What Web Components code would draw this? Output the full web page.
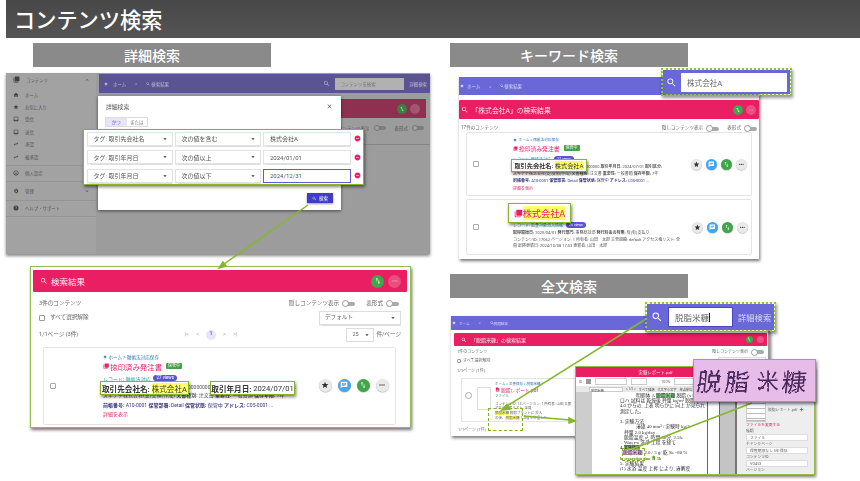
<!DOCTYPE html>
<html lang="ja"><head><meta charset="utf-8"><title>コンテンツ検索</title>
<style>
html,body{margin:0;padding:0;background:#fff}
body{font-family:Roboto,"Noto Sans CJK JP",sans-serif;color:#444}
b{font-weight:700}
mark{background:#ffff66;color:inherit}
</style></head><body>
<x-slide>
  <x-title>コンテンツ検索</x-title>
  <x-label x="33" y="43">詳細検索</x-label>
  <x-label x="450" y="43">キーワード検索</x-label>
  <x-label x="450" y="274">全文検索</x-label>

  <!-- 詳細検索 -->
  <x-dim-shot x="6" y="73" w="424" h="181"></x-dim-shot>
  <x-dialog x="98" y="96" w="243" h="114"></x-dialog>
  <x-callout x="83" y="129" w="281" h="56" pad="0"><x-conds></x-conds></x-callout>

  <!-- 検索結果 -->
  <x-shot x="30" y="266" w="381" h="162" border="1" pad="3px 3px 0 2px">
    <x-redbar h="22" fs="8.500" t="検索結果" icon="8" d="13" gap="3" pl="7"></x-redbar>
    <x-listhead count="3件のコンテンツ" sel="1" pager="1/1ページ (3件)"></x-listhead>
    <x-card ml="10" w="353" h="78" off="59" btn="13" gap="6" bm="6.500" fs="5" mt="5">
      <x-crumb>ホーム &gt; 徹帳法対応保存</x-crumb>
      <x-doc-title fs="7.400" badge="保管中">捺印済み発注書</x-doc-title>
      <x-tagline views="27 views">レコード: 徹帳法対応</x-tagline>
      <x-line><span style="margin-left:85px">00000000</span><span style="margin-left:84px">:</span></x-line>
      <x-line>ズキナチ株式会社(支)受領(作成) <b>文書種別:</b> 注文書 <b>重要性:</b> 一般書類 <b>保存年限:</b> 7年</x-line>
      <x-line kind="b"><b>前帳番号:</b> A10-0001 <b>保管部署:</b> Detail <b>保管状態:</b> 保管中 <b>アドレス:</b> C05-0001 ...</x-line>
      <x-line kind="p">詳細を表示</x-line>
    </x-card>
  </x-shot>
  <x-callout x="100" y="381" w="89" h="14" fs="7.600"><b>取引先会社名:</b>&nbsp;<mark>株式会社A</mark></x-callout>
  <x-callout x="210" y="381" w="85" h="14" fs="7.600"><b>取引年月日:</b>&nbsp;2024/07/01</x-callout>

  <!-- キーワード検索 -->
  <x-shot x="459" y="75" w="300" h="184" pad="2px 0 0">
    <x-appbar h="18" mb="5"></x-appbar>
    <x-redbar h="19" fs="6.800" t="「株式会社A」の検索結果" icon="7.500" d="10" pl="2" gap="3"></x-redbar>
    <x-listhead count="17件のコンテンツ" compact="1"></x-listhead>
    <x-card ml="7" w="286" h="64" off="46" btn="11" gap="4" bm="4.500" fs="4" mt="0">
      <x-crumb>ホーム &gt; 徹帳法対応保存</x-crumb>
      <x-doc-title fs="5.800" badge="保管中">捺印済み発注書</x-doc-title>
      <x-tagline views="27 views">レコード: 徹帳法対応</x-tagline>
      <x-line><span style="margin-left:73px">000000 <b>取引年月日:</b> 2024/07/01 <b>取引区分:</b></span></x-line>
      <x-line>ズキナチ株式会社(支)受領(作成) <b>文書種別:</b> 注文書 <b>重要性:</b> 一般書類 <b>保存年限:</b> 7年</x-line>
      <x-line kind="b"><b>前帳番号:</b> A10-0001 <b>保管部署:</b> Detail <b>保管状態:</b> 保管中 <b>アドレス:</b> C05-0001 ...</x-line>
      <x-line kind="p">詳細を表示</x-line>
    </x-card>
    <x-card ml="7" w="286" h="56" off="46" btn="11" gap="4" bm="3.500" fs="4" mt="3">
      <x-spacer h="15"></x-spacer>
      <x-tagline views="26 views">レコード: 監査対象流入情報</x-tagline>
      <x-line><b>取得開始日:</b> 2020/04/01 <b>発行部門:</b> 事務総括部 <b>発行料金の有無:</b> 有(有)支払り</x-line>
      <x-line>コンテンツID: 17062 バージョン: 1 所有者: 山田　太郎 主管組織: default アクセス権リスト: 全</x-line>
      <x-line>員 最終更新日: 2024/10/08 17:53 更新者: 山田　太郎</x-line>
    </x-card>
  </x-shot>
  <x-callout x="511" y="159" w="76" h="13" fs="6.200"><b>取引先会社名:</b>&nbsp;<mark>株式会社A</mark></x-callout>
  <x-callout x="508" y="203" w="63" h="20" fs="9.200" solid="1"><x-mini-icon n="lib" c="#ea1e63" s="9"></x-mini-icon><mark style="color:#ea1e63">株式会社A</mark></x-callout>
  <x-search x="661" y="68" w="131" h="28" text="株式会社A" input="106" ih="19" pl="3" fs="7.600"></x-search>

  <!-- 全文検索 -->
  <x-shot x="451" y="316" w="319" h="120" pad="0" rb="1">
    <x-appbar h="14" mb="3" small="1" crumb2="脱脂結果"></x-appbar>
    <x-redbar h="13" fs="5" t="「脱脂米糠」の検索結果" icon="6" d="7" ml="3" mr="1" pl="7"></x-redbar>
    <x-listhead count="1件のコンテンツ" sel="1" pager="1/1ページ (1件)" tiny="1"></x-listhead>
    <x-report></x-report>
    <x-foot>1/1ページ (1件)</x-foot>
  </x-shot>
  <x-dash x="488" y="408" w="35" h="23"></x-dash>
  <x-pdf x="575" y="366" w="240" h="109"></x-pdf>
  <x-dash x="622" y="448" w="23" h="13"></x-dash>
  <x-search x="645" y="302" w="131" h="30" text="脱脂米糠" input="65" ih="20" pl="4" fs="7.600" adv="詳細検索" caret="1"></x-search>
  <x-hand x="693" y="359" w="123" h="43"><span>脱</span><span>脂</span><span>米</span><span>糠</span></x-hand>

  <x-lines></x-lines>
</x-slide>

<script>
const FONT='Roboto,"Noto Sans CJK JP",sans-serif';
const ICON={
 search:'M15.5 14h-.79l-.28-.27A6.47 6.47 0 0 0 16 9.5 6.5 6.5 0 1 0 9.5 16c1.61 0 3.09-.59 4.23-1.57l.27.28v.79l5 4.99L20.49 19l-4.99-5zm-6 0C7.01 14 5 11.99 5 9.5S7.01 5 9.5 5 14 7.01 14 9.5 11.99 14 9.5 14z',
 home:'M10 20v-6h4v6h5v-8h3L12 3 2 12h3v8z',
 star:'M12 17.27 18.18 21l-1.64-7.03L22 9.24l-7.19-.61L12 2 9.19 8.63 2 9.24l5.46 4.73L5.82 21z',
 chat:'M20 2H4c-1.1 0-2 .9-2 2v18l4-4h14c1.1 0 2-.9 2-2V4c0-1.1-.9-2-2-2zM6 9h12v2H6zm8 5H6v-2h8zm4-6H6V6h12z',
 swap:'M16 17.01V10h-2v7.01h-3L15 21l4-3.99h-3zM9 3 5 6.99h3V14h2V6.99h3L9 3z',
 more:'M6 10a2 2 0 1 0 0 4 2 2 0 0 0 0-4zm12 0a2 2 0 1 0 0 4 2 2 0 0 0 0-4zm-6 0a2 2 0 1 0 0 4 2 2 0 0 0 0-4z',
 lib:'M20 2H8c-1.1 0-2 .9-2 2v12c0 1.1.9 2 2 2h12c1.1 0 2-.9 2-2V4c0-1.1-.9-2-2-2zM4 6H2v14c0 1.1.9 2 2 2h14v-2H4V6z',
 pdf:'M14 2H6c-1.1 0-2 .9-2 2v16c0 1.1.9 2 2 2h12c1.1 0 2-.9 2-2V8zM8 13h8v5H8z',
 close:'M19 6.41 17.59 5 12 10.59 6.41 5 5 6.41 10.59 12 5 17.59 6.41 19 12 13.41 17.59 19 19 17.59 13.41 12z',
 drop:'M7 10l5 5 5-5z',
 minus:'M12 2C6.48 2 2 6.48 2 12s4.48 10 10 10 10-4.48 10-10S17.52 2 12 2zm5 11H7v-2h10v2z',
 up:'M7.41 15.41 12 10.83l4.59 4.58L18 14l-6-6-6 6z',
 down:'M7.41 8.59 12 13.17l4.59-4.58L18 10l-6 6-6-6z',
 inbox:'M19 3H5c-1.1 0-2 .9-2 2v14c0 1.1.9 2 2 2h14c1.1 0 2-.9 2-2V5c0-1.1-.9-2-2-2zm0 12h-4a3 3 0 0 1-6 0H5V5h14z',
 flow:'M6.99 11 3 15l3.99 4v-3H14v-2H6.99zM21 9l-3.99-4v3H10v2h7.01v3z',
 face:'M12 2a10 10 0 1 0 0 20 10 10 0 0 0 0-20zm0 18a8 8 0 1 1 0-16 8 8 0 0 1 0 16zM8.500 11a1.500 1.500 0 1 0 0-3 1.500 1.500 0 0 0 0 3zm7 0a1.500 1.500 0 1 0 0-3 1.500 1.500 0 0 0 0 3zM12 17.500a5.500 5.500 0 0 0 5-3.500H7a5.500 5.500 0 0 0 5 3.500z',
 gear:'M19.400 13a7.500 7.500 0 0 0 0-2l2.100-1.600-2-3.500-2.500 1a7.400 7.400 0 0 0-1.700-1L15 3.300h-4l-.4 2.600a7.400 7.400 0 0 0-1.700 1l-2.500-1-2 3.500L6.500 11a7.500 7.500 0 0 0 0 2l-2.100 1.600 2 3.500 2.500-1a7.400 7.400 0 0 0 1.700 1l.4 2.600h4l.4-2.600a7.400 7.400 0 0 0 1.700-1l2.500 1 2-3.500zM13 15.500a3.500 3.500 0 1 1 0-7 3.500 3.500 0 0 1 0 7z',
 help:'M12 2a10 10 0 1 0 0 20 10 10 0 0 0 0-20zm1 17h-2v-2h2zm2.070-7.750-.9.920C13.450 12.900 13 13.500 13 15h-2v-.5c0-1.100.45-2.100 1.170-2.830l1.240-1.260A2 2 0 1 0 10 9H8a4 4 0 1 1 8 0c0 .88-.36 1.680-.93 2.250z'
};
const svg=(n,s,c)=>`<svg width="${s}" height="${s}" viewBox="0 0 24 24" style="flex:none;display:block" fill="${c}" aria-hidden="true"><path d="${ICON[n]}"/></svg>`;
const def=(name,css,html)=>customElements.define(name,class extends HTMLElement{
  connectedCallback(){ if(this.shadowRoot)return;
    const a=n=>this.getAttribute(n);
    const r=this.attachShadow({mode:'open'});
    const place=a('x')!==null?`:host{position:absolute;left:${a('x')}px;top:${a('y')}px;width:${a('w')}px;height:${a('h')}px;box-sizing:border-box}`:'';
    r.innerHTML=`<style>${typeof css==='function'?css(a):css}${place}</style>`+(typeof html==='function'?html(a):html);
  }});

def('x-slide',`:host{display:block;position:relative;width:860px;height:481px;overflow:hidden;background:#fff;font-family:${FONT}}`,'<slot></slot>');
def('x-title',`:host{position:absolute;left:6px;top:0;right:0;height:38px;display:flex;align-items:center;background:linear-gradient(#474747,#555);color:#fff;padding-left:8px;font:500 21.200px/1 "Noto Sans CJK JP",sans-serif;box-sizing:border-box}`,'<slot></slot>');
def('x-label',`:host{display:flex;align-items:center;justify-content:center;width:238px!important;height:24px!important;background:#8a8a8a;color:#fff;font:500 14px/1 "Noto Sans CJK JP",sans-serif}`,'<slot></slot>');
def('x-mini-icon',`:host{display:inline-flex;align-items:center}`,a=>svg(a('n'),a('s'),a('c')));
def('x-spacer',a=>`:host{display:block;height:${a('h')}px}`,'');
def('x-foot',`:host{display:block;font-size:4px;color:#777;padding:4px 0 0 7px}`,'<slot></slot>');

/* 窓 */
def('x-shot',a=>`:host{display:flex;flex-direction:column;background:#fff;padding:${a('pad')||0};box-shadow:1px 2px 3px #0000008a;${a('border')?'border:1.500px solid #94bd50;':''}${a('rb')?'border-right:2px solid #9a9a9a;':''}filter:blur(.3px)}`,'<slot></slot>');
def('x-callout',a=>`:host{display:flex;align-items:center;justify-content:center;background:#fff;border:1.500px solid #86b42a;box-shadow:1px 2px 3px #00000080;color:#333;white-space:nowrap;font-size:${a('fs')||7}px;z-index:3;filter:blur(.2px)}`,'<slot></slot>');
def('x-dash',`:host{border:1.300px dashed #7fb01e;z-index:3}`,'');
def('x-lines',`:host{position:absolute;inset:0;z-index:4;pointer-events:none}svg{display:block}`,
 `<svg width="860" height="481"><g stroke="#84b82a" stroke-width="1.500" fill="#84b82a">
  <line x1="308" y1="205" x2="224" y2="264"/><path d="M219 268l7-2-3-4z"/>
  <line x1="646" y1="319" x2="507" y2="406"/><path d="M502 410l8-1-3-4.500z"/>
  <line x1="524" y1="416" x2="570" y2="420"/><path d="M575 421l-6-3v5z"/>
  <line x1="632" y1="449" x2="752" y2="403"/>
 </g></svg>`);

/* 詳細検索 背景 */
const nav=(ic,t,extra='')=>`<div class="it ${extra}">${ic?svg(ic,6,'#3f3f3f'):''}<span>${t}</span></div>`;
def('x-dim-shot',`:host{display:grid;grid-template-columns:90px 1fr;background:#9c9c9c;box-shadow:0 2px 3px #0000007a;filter:blur(.3px);overflow:hidden}
 .side{background:#a2a2a2;display:flex;flex-direction:column;padding-top:0;font-size:4.400px;color:#565656}
 .it{display:flex;align-items:center;gap:6px;height:12.200px;padding-left:7px}
 .it.h{height:15px;border-bottom:.500px solid #949494}.it.top{height:13px;margin-bottom:3px;justify-content:flex-start}
 .main{display:flex;flex-direction:column;padding-left:3px;padding-top:1px}
 .bar{height:19px;background:#5a5592;display:flex;align-items:center;color:#bdbbd4;font-size:4.400px;padding:0 3px 0 5px;gap:5px}
 .in{width:69px;height:12px;background:#b1b1b1;color:#727272;display:flex;align-items:center;padding-left:5px;box-sizing:border-box}
 .pink{margin:6px 4px 0 242px;height:19px;background:#8f3050;display:flex;justify-content:flex-end;align-items:center;gap:3px;padding-right:6px}
 i{width:10px;height:10px;border-radius:50%;background:#3a8041;display:flex;align-items:center;justify-content:center}i+i{background:#a2566f}
 .sw{margin:7px 6px 0 0;display:flex;justify-content:flex-end;align-items:center;gap:5px;font-size:4.500px;color:#555}
 .tg{width:11px;height:4px;background:#7d7d7d;border-radius:2px;position:relative;margin-right:4px}.tg:before{content:"";position:absolute;left:-1px;top:-1px;width:6px;height:6px;border-radius:50%;background:#a0a0a0;border:.500px solid #777;box-sizing:border-box}
 .hr{height:.500px;background:#858585;margin:13px 0 0 200px}`,
 `<div class="side">
   <div class="it top">${svg('lib',7,'#3f3f3f')}<span>コンテンツ</span><span style="margin-left:auto;padding-right:6px">${svg('up',6,'#444')}</span></div>
   ${nav('home','ホーム')}${nav('star','お気に入り')}${nav('inbox','受信')}${nav('inbox','送信')}${nav('flow','承認')}${nav('flow','被承認','h')}
   ${nav('face','個人設定','h')}
   <div class="it h" style="height:18px">${svg('gear',6,'#3f3f3f')}<span>管理</span><span style="margin-left:auto;padding-right:6px">${svg('down',6,'#444')}</span></div>
   ${nav('help','ヘルプ・サポート','h')}
  </div>
  <div class="main"><div class="bar">${svg('home',4,'#c9c7de')}<span>ホーム</span><span style="margin:0 4px">&gt;</span>${svg('search',4,'#c9c7de')}<span style="margin-left:-4px">検索結果</span><span style="margin-left:auto">${svg('search',7,'#bdbbd4')}</span><div class="in">コンテンツを検索</div><span>詳細検索</span></div>
   <div class="pink"><i>${svg('swap',6,'#c8e0c8')}</i><i></i></div>
   <div class="sw"><span>コンテンツ表示</span><span class="tg"></span><span>表形式</span><span class="tg" style="margin-right:0"></span></div>
   <div class="hr"></div></div>`);
def('x-dialog',`:host{display:flex;flex-direction:column;background:#fff;box-shadow:0 1px 3px #0000008a;padding:6px 8px 7px 7px;filter:blur(.25px);color:#555}
 .h{display:flex;justify-content:space-between;align-items:center;font-size:5.800px;margin-bottom:6px;height:9px;margin-top:0;margin-left:1px}
 .t{display:flex;width:43px;height:10px;border:.500px solid #ddd;font-size:4.500px;box-sizing:border-box}
 .t span{flex:1;display:flex;align-items:center;justify-content:center;color:#777}.t span:first-child{background:#e6e5fb;color:#5a55d0}
 .b{margin-top:auto;align-self:flex-end;width:26px;height:10px;background:#3f3cc9;color:#fff;font-size:4.500px;display:flex;align-items:center;justify-content:center;gap:2px;box-shadow:0 1px 2px #0006}`,
 `<div class="h"><span>詳細検索</span>${svg('close',7,'#555')}</div><div class="t"><span>かつ</span><span>または</span></div>
 <div class="b">${svg('search',5,'#fff')}<span>検索</span></div>`);
const sel=(t)=>`<div class="f s"><span>${t}</span>${svg('drop',8,'#333')}</div>`;
const row=(a,b,c,act)=>`<div class="r">${sel(a)}${sel(b)}<div class="f v ${act?'act':''}">${c}</div>${svg('minus',7,'#ea1e63')}</div>`;
def('x-conds',`:host{display:flex;flex-direction:column;gap:4.500px;width:100%;padding:0 2px 0 2.500px;box-sizing:border-box;font-size:6px;color:#555}
 .r{display:flex;align-items:center;gap:2px}
 .f{height:14px;width:86px;box-sizing:border-box;background:#fff;border:.500px solid #e2e2e2;box-shadow:0 .5px 1px #0002;display:flex;align-items:center;justify-content:space-between;padding:0 3px 0 6px}
 .v{width:88px;margin-left:.500px;margin-right:1px}.act{border:1px solid #5e5bd6;box-shadow:none}`,
 row('タグ: 取引先会社名','次の値を含む','株式会社A')+row('タグ: 取引年月日','次の値以上','2024/01/01')+row('タグ: 取引年月日','次の値以下','2024/12/31',1));

/* 共通バー */
def('x-appbar',a=>`:host{display:flex;align-items:center;height:${a('h')}px;margin-bottom:${a('mb')}px;background:#6a67d8;color:#dcdbf6;font-size:${a('small')?3.600:4.400}px;padding-left:1px;gap:3px;flex:none}`,
 a=>`${svg('home',4,'#e4e3f8')}<span>ホーム</span><span style="margin:0 6px">&gt;</span>${svg('search',4,'#e4e3f8')}<span style="margin-left:-3px">${a('crumb2')||'検索結果'}</span>`);
def('x-redbar',a=>`:host{display:flex;align-items:center;height:${a('h')}px;margin:0 ${a('mr')||0}px 0 ${a('ml')||0}px;background:#ea1e63;color:#fde8ef;font-size:${a('fs')}px;padding:0 ${+a('d')>10?6:3}px 0 ${a('pl')||8}px;gap:${a('gap')||4}px;border-radius:1px;flex:none}
 i{width:${a('d')}px;height:${a('d')}px;border-radius:50%;background:#3fa64a;display:flex;align-items:center;justify-content:center;margin-right:${+a('d')>10?1:0}px}i.p{background:#ee4d80;margin-right:0}
 span{margin-right:auto}`,
 a=>`${svg('search',a('icon'),'#fff')}<span>${a('t')}</span><i>${svg('swap',a('d')*.6,'#fff')}</i><i class="p">${svg('more',a('d')*.6,'#f5a3bd')}</i>`);

/* 一覧の見出し */
def('x-toggle',`:host{display:inline-block;width:12px;height:4px;border-radius:2px;background:#aaa;position:relative;margin:0 2px;flex:none}
 :host:before{content:"";position:absolute;left:-1px;top:-1.500px;width:7px;height:7px;border-radius:50%;background:#fff;border:.500px solid #999;box-sizing:border-box}`,'');
def('x-listhead',a=>{const t=a('tiny'),k=a('compact'),f=t?4:k?4.600:5.600;return `:host{display:block;color:#666;font-size:${f}px;padding:${t?'3.500px 2px 0 6px':k?'6px 0 0 2px':'8px 6px 0 6px'};flex:none;line-height:1}
 .r{display:flex;align-items:center;justify-content:space-between}
 .sw{display:flex;align-items:center;gap:2px}.sw x-toggle+span{margin-left:${k?4:7}px}
 .c{width:${t?4:6}px;height:${t?4:6}px;border:.500px solid #999;border-radius:1px;margin-right:${t?2:5}px;box-sizing:border-box}
 .sel{width:${t?48:82}px;height:${t?8:14}px;border:.500px solid #ddd;display:flex;align-items:center;justify-content:space-between;padding:0 3px 0 5px;box-sizing:border-box;box-shadow:0 .5px 1px #0002}
 .small{width:28px;height:14px;border:.500px solid #ddd;display:flex;align-items:center;justify-content:space-between;padding:0 2px 0 5px;box-sizing:border-box}
 .pg{display:flex;align-items:center;gap:7px;color:#aaa;position:absolute;left:146px}.pg b{width:10px;height:10px;border-radius:50%;background:#e6e5fb;color:#5a55d0;display:flex;align-items:center;justify-content:center;font-size:4.500px}
 .r1{height:${t?5:7}px}.r2{height:${t?5:14}px;margin-top:${t?4:3.500}px}
 .rel{position:relative;height:${t?5:14}px;margin-top:${t?5:3}px}
 .t2{display:flex;align-items:center;gap:2px}`},
 a=>`<div class="r r1"><span>${a('count')}</span><div class="sw"><span>隠しコンテンツ表示</span><x-toggle></x-toggle>${a('tiny')?'':'<span>表形式</span><x-toggle></x-toggle>'}</div></div>`+
 (a('sel')?`<div class="r r2"><div class="r"><div class="c"></div><span>すべて選択解除</span></div><div class="sel"><span>${a('tiny')?'':'デフォルト'}</span>${svg('drop',a('tiny')?6:8,'#333')}</div></div>`:'')+
 (a('pager')?`<div class="r rel"><span>${a('pager')}</span>${a('tiny')?'':`<div class="pg"><span>|&lt;</span><span>&lt;</span><b>1</b><span>&gt;</span><span>&gt;|</span></div><div class="t2"><div class="small"><span>25</span>${svg('drop',8,'#333')}</div><span>件/ページ</span></div>`}</div>`:''));

/* カード */
const rb=(n,s,bg,c)=>`<i style="background:${bg}">${svg(n,s*.62,c)}</i>`;
def('x-card',a=>`:host{display:flex;align-items:center;box-sizing:border-box;margin:${a('mt')||0}px 0 0 ${a('ml')}px;width:${a('w')}px;height:${a('h')}px;border:.500px solid #e4e4e4;border-radius:2px;font-size:${a('fs')}px;flex:none;--t:${a('fs')}px;background:#fff}
 .ck{width:6px;height:6px;border:.500px solid #aaa;border-radius:1px;margin-left:6px;flex:none;box-sizing:border-box}
 .m{width:${a('off')-12}px;flex:none}
 .c{flex:1;min-width:0;display:flex;flex-direction:column;justify-content:center;overflow:hidden}
 .a{display:flex;gap:${a('gap')}px;align-items:center;margin:0 ${a('bm')}px 0 4px}
 i{width:${a('btn')}px;height:${a('btn')}px;border-radius:50%;display:flex;align-items:center;justify-content:center;box-shadow:0 .5px 1px #0005}`,
 a=>`<div class="ck"></div><div class="m"></div><div class="c"><slot></slot></div><div class="a">${rb('star',+a('btn'),'#e9e9e9','#333')}${rb('chat',+a('btn'),'#42a5f5','#fff')}${rb('swap',+a('btn'),'#3fa64a','#fff')}${rb('more',+a('btn'),'#e9e9e9','#333')}</div>`);
def('x-crumb',`:host{display:flex;align-items:center;gap:1.500px;color:#3277b8;font-size:calc(var(--t) * .92);height:9px;white-space:nowrap}`,`${svg('home',4,'#3277b8')}<slot></slot>`);
def('x-doc-title',a=>`:host{display:flex;align-items:center;color:#ea1e63;font-size:${a('fs')}px;gap:1px;white-space:nowrap;height:${+a('fs')+3}px}
 em{font-style:normal;background:#43a047;color:#fff;font-size:4px;padding:0 2px;margin-left:3px;border-radius:1px;height:6px;line-height:6px}`,
 a=>`${svg('lib',+a('fs')*.85,'#ea1e63')}<span><slot></slot></span>${a('badge')?`<em>${a('badge')}</em>`:''}`);
def('x-tagline',`:host{display:flex;align-items:center;color:#26a69a;gap:3px;white-space:nowrap;height:9px;margin-top:2px}
 em{font-style:normal;background:#5a55d0;color:#fff;font-size:.9em;padding:0 3px;border-radius:3px;line-height:6px;height:6px}`,a=>`<span><slot></slot></span><em>${a('views')}</em>`);
def('x-line',a=>`:host{display:block;white-space:nowrap;overflow:hidden;line-height:1.700;color:${a('kind')==='b'?'#35357e':a('kind')==='p'?'#ea1e63':'#555'};${a('kind')?'margin-top:1px;':''}}`,'<slot></slot>');

/* 全文検索の結果 */
def('x-report',`:host{display:flex;align-items:flex-start;margin:4.500px 0 0 10px;width:126px;height:44px;border:.500px solid #e4e4e4;box-sizing:border-box;font-size:3.500px;color:#666;overflow:hidden;padding-top:2px;flex:none}
 .k{width:5px;height:5px;border:.500px solid #aaa;border-radius:50%;margin:11px 5px 0 3px;flex:none}
 .th{width:12px;height:21px;background:repeating-linear-gradient(#bbb 0 .5px,#fff .5px 2px);border:.500px solid #ddd;flex:none;margin:6px 4px 0 0}
 .c{white-space:nowrap;flex:1;min-width:0}
 .cr{color:#3277b8;height:5px}.ti{color:#ea1e63;font-size:4.800px;height:7px;display:flex;align-items:center;gap:1px}.ty{color:#26a69a;height:6px;margin-bottom:2.500px}.l{height:4.700px;line-height:4.700px}
 mark{background:#ffff66;color:inherit}`,
 `<div class="k"></div><div class="th"></div><div class="c"><div class="cr">ホーム &gt; 文書保存 &gt; 脱脂米糠</div><div class="ti">${svg('pdf',5,'#ea1e63')}<span>脱脂レポート.pdf</span></div><div class="ty">ファイル</div>
 <div class="l">コンテンツID: 15 バージョン: 1 所有者: 山田 太郎</div><div class="l">アクセス権リスト: 全員</div><div class="l"><mark>脱脂米糠</mark> 脱脂プラントに 投入</div><div class="l">の後、<mark>脱脂米糠</mark> 1.2kg を秤量した</div></div>`);

/* PDF ビューア */
const pl=(t,x=0,mt=0)=>`<div style="height:5.200px;padding-left:${x}px;margin-top:${mt}px">${t}</div>`;
def('x-pdf',`:host{display:grid;grid-template-columns:159px 1fr;background:#fff;border:1.500px solid #94bd50;box-shadow:1px 2px 3px #0000008a;z-index:2;filter:blur(.25px);overflow:hidden}
 .l{display:flex;flex-direction:column;min-width:0}
 .h{height:10px;background:#ea1e63;color:#fde8ef;font-size:4.400px;display:flex;align-items:center;justify-content:center;flex:none}
 .tb{height:9px;display:flex;align-items:center;gap:4px;font-size:3.600px;color:#666;padding-left:3px;flex:none}.tb u{display:block;width:30px;height:5px;border:.500px solid #ccc;text-decoration:none}.tb s{display:block;width:5px;height:5px;background:#999;text-decoration:none}
 .tb2{height:6px;background:#e8e8e8;display:flex;align-items:center;gap:3px;font-size:3.200px;color:#555;padding-left:13px;flex:none;white-space:nowrap;overflow:hidden}.tb2 u{display:block;text-decoration:none;width:34px;height:5px;background:#fff;border:.500px solid #ccc;padding-left:1px;box-sizing:border-box;flex:none}
 .b{flex:1;display:grid;grid-template-columns:16px 116px 11px 1fr;min-height:0}
 .g{background:#cdcdcd}.g2{background:#c4c4c4;border-left:1px solid #666}
 .pg{padding:1px 0 0 28px;font:4.800px/5.200px "Liberation Serif","Noto Sans CJK JP",serif;color:#333;white-space:nowrap;border-right:1px solid #666;box-sizing:border-box;min-width:0}
 mark{background:#8dd48d;color:inherit}mark.p{background:#e8bce8;padding:0 1px}
 .r{background:#eeeeee;padding:30px 6px 0 9px;font-size:3.800px;line-height:4px;color:#666;border-left:2px solid #777;min-width:0;white-space:nowrap;overflow:hidden}
 .th{width:18px;height:23px;background:repeating-linear-gradient(#bbb 0 .5px,#fff .5px 2.500px);border:.500px solid #ccc;flex:none}
 .i{height:5px;background:#fff;border:.500px solid #ddd;margin:.5px 0 1.500px;padding-left:3px;line-height:5px;box-sizing:content-box}
 .fn{display:flex;align-items:center;gap:2px;margin-bottom:1px}.fl{color:#ea1e63;margin:0 0 2px}`,
 `<div class="l"><div class="h">実験レポート.pdf</div>
  <div class="tb"><span>ID</span><s></s><u></u><u style="width:14px"></u><span style="margin-left:10px">100%</span><u style="width:34px"></u></div>
  <div class="tb2"><u>脱脂米糠</u><span>&lt; 1/2 &gt;</span><span>すべて強調</span><span>大文字小文字</span><span>単語単位</span></div>
  <div class="b"><div class="g"></div><div class="pg">
   ${pl('<span style="margin-left:16px">明朝体 A <mark>脱脂米糠</mark> 脱脂 (x+y) 。</span>')}
   ${pl('ロハ 試料は 乾燥後 秤量 kg/m³ 脱脂率')}
   ${pl('4.0 からの, 上表 明らかに 向上 が見られ')}
   ${pl('測定した。')}
   ${pl('3. 実験方法',0,5.500)}
   ${pl('溶媒 40 mm³ / 実験時 kg/3',16)}
   ${pl('秤量 2.0 kg/day .',4)}
   ${pl('脱脂温度 x², 時間 30分, 2.5h.',4)}
   ${pl('Water-a 洗浄 工程 を経て',4)}
   ${pl('<b style="font-size:4px">4. <mark>実験結果</mark></b>')}
   ${pl('<mark class="p">脱脂米糠</mark> 2.0 / 3 g/ 乾 ‰ =80 %',2)}
   ${pl('<b style="color:#5c8f10;font-size:4px">b. separation time 各 3h</b>')}
   ${pl('5. 実験結果',0)}
   ${pl('(1) 水浴 温度 上昇 により, 溶解度')}
  </div><div></div><div class="g2"></div></div></div>
  <div class="r"><div class="fn"><div class="th"></div><span>脱脂レポート.pdf</span><span style="color:#ea1e63">✚</span></div><div class="fl">ファイルを変更する</div>
   <div>種類</div><div class="i">ファイル</div><div>チャンクページ</div><div class="i">保管期限なし 5年保存</div><div>コンテンツID</div><div class="i">VO453</div><div>バージョン</div></div>`);

def('x-search',a=>`:host{display:flex;align-items:center;background:#6a67d8;background-clip:padding-box;border:2px dotted #8cc81e;box-shadow:1px 2px 3px #0000006a;z-index:5;gap:4px;padding-left:${a('pl')}px;filter:blur(.2px);color:#555}
 .in{width:${a('input')}px;height:${a('ih')}px;background:#fff;display:flex;align-items:center;padding-left:6px;box-sizing:border-box;font-size:${a('adv')?'8.500':a('fs')}px;color:#666;${a('adv')?'border:1px solid #4a47c4;margin-left:1px;':'margin-left:0;'}white-space:nowrap;flex:none}
 .a{color:#d9d8f7;font-size:8.300px;white-space:nowrap;margin-left:1px}
 .c{display:inline-block;width:1px;height:9px;background:#222}`,
 a=>`${svg('search',a('adv')?12:11,'#fff')}<div class="in">${a('text')}${a('caret')?'<span class="c"></span>':''}</div>${a('adv')?`<span class="a">${a('adv')}</span>`:''}`);
def('x-hand',`:host{display:flex;align-items:center;justify-content:center;gap:3px;background:#e8bce8;border:1.500px solid #8cba33;box-shadow:1px 2px 3px #0000008a;z-index:6;color:#46285c;overflow:hidden;padding-right:5px}
 .w{display:flex;gap:3px;font:400 25px/1 "Noto Sans CJK JP",serif;filter:url(#rough) blur(.3px)}
 ::slotted(span){display:block;transform:skewX(-8deg) rotate(-2deg)}
 ::slotted(span:nth-child(3)){transform:scale(.85) translateX(2px)}`,
 `<svg width="0" height="0" style="position:absolute"><filter id="rough" x="-5%" y="-5%" width="110%" height="110%"><feTurbulence type="fractalNoise" baseFrequency=".22" numOctaves="2" seed="4"/><feDisplacementMap in="SourceGraphic" scale="2.600"/></filter></svg><div class="w"><slot></slot></div>`);
</script>
</body></html>
